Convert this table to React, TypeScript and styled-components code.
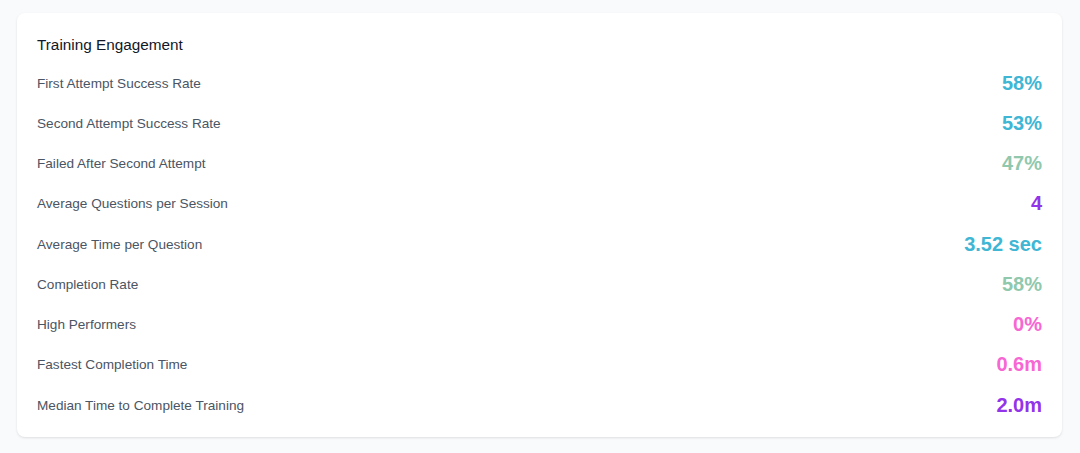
import styled, { createGlobalStyle } from 'styled-components'

const GlobalStyle = createGlobalStyle`
    body {
        margin: 0;
        background: #f9fafb;
        font-family: "Helvetica Neue", "Liberation Sans", Arial, sans-serif;
    }
`

type Tone = 'cyan' | 'green' | 'purple' | 'pink'

const tones: Record<Tone, string> = {
    cyan: '#3fb6d4',
    green: '#90c8ae',
    purple: '#9333ea',
    pink: '#f766d2',
}

const metrics: { label: string; value: string; tone: Tone }[] = [
    { label: 'First Attempt Success Rate', value: '58%', tone: 'cyan' },
    { label: 'Second Attempt Success Rate', value: '53%', tone: 'cyan' },
    { label: 'Failed After Second Attempt', value: '47%', tone: 'green' },
    { label: 'Average Questions per Session', value: '4', tone: 'purple' },
    { label: 'Average Time per Question', value: '3.52 sec', tone: 'cyan' },
    { label: 'Completion Rate', value: '58%', tone: 'green' },
    { label: 'High Performers', value: '0%', tone: 'pink' },
    { label: 'Fastest Completion Time', value: '0.6m', tone: 'pink' },
    { label: 'Median Time to Complete Training', value: '2.0m', tone: 'purple' },
]

const App = () => {
    return (
        <>
            <GlobalStyle />
            <Page>
                <Card>
                    <Title>Training Engagement</Title>
                    <List>
                        {metrics.map(m => (
                            <Row key={m.label}>
                                <Label>{m.label}</Label>
                                <Value $tone={m.tone}>{m.value}</Value>
                            </Row>
                        ))}
                    </List>
                </Card>
            </Page>
        </>
    )
}

export default App

const Page = styled.div`
    padding: 13px 18px 16px 17px;
`

const Card = styled.section`
    background: #ffffff;
    border-radius: 8px;
    box-shadow: 0 1px 3px rgba(0, 0, 0, 0.08), 0 1px 2px rgba(0, 0, 0, 0.04);
    padding: 20px 20px 12px 20px;
`

const Title = styled.h2`
    margin: 0 0 6px 0;
    font-size: 15.3px;
    line-height: 24px;
    font-weight: 400;
    color: #111827;
`

const List = styled.div`
    display: flex;
    flex-direction: column;
`

const Row = styled.div`
    display: flex;
    align-items: center;
    justify-content: space-between;
    height: 40.25px;
`

const Label = styled.span`
    font-size: 13.6px;
    color: #4b5563;
`

const Value = styled.span<{ $tone: Tone }>`
    font-size: 20px;
    font-weight: 700;
    color: ${props => tones[props.$tone]};
`
